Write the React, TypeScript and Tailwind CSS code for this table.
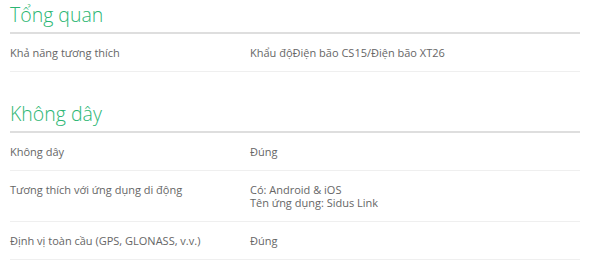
import React from "react";

interface SpecRow {
  label: string;
  value: string[];
}

interface SpecGroup {
  title: string;
  rows: SpecRow[];
}

const groups: SpecGroup[] = [
  {
    title: "Tổng quan",
    rows: [
      {
        label: "Khả năng tương thích",
        value: ["Khẩu độĐiện bão CS15/Điện bão XT26"],
      },
    ],
  },
  {
    title: "Không dây",
    rows: [
      { label: "Không dây", value: ["Đúng"] },
      {
        label: "Tương thích với ứng dụng di động",
        value: ["Có: Android & iOS", "Tên ứng dụng: Sidus Link"],
      },
      { label: "Định vị toàn cầu (GPS, GLONASS, v.v.)", value: ["Đúng"] },
    ],
  },
];

const App: React.FC = () => {
  return (
    <div className="w-[600px] h-[273px] bg-white overflow-hidden font-['Open_Sans',sans-serif]">
      <div className="w-[570px] ml-[10px]">
        {groups.map((group, gi) => (
          <section key={group.title} className={gi > 0 ? "mt-[27px]" : ""}>
            <h2 className="text-[19.5px] leading-[30px] font-light text-[#2bb673] pb-[2px] border-b-2 border-[#dedede]">
              {group.title}
            </h2>
            {group.rows.map((row) => (
              <div
                key={row.label}
                className="grid grid-cols-[240px_1fr] py-[12px] border-b border-[#efefef] text-[11px] leading-[13px] text-[#666]"
              >
                <div>{row.label}</div>
                <div>
                  {row.value.map((line) => (
                    <div key={line}>{line}</div>
                  ))}
                </div>
              </div>
            ))}
          </section>
        ))}
      </div>
    </div>
  );
};

export default App;
